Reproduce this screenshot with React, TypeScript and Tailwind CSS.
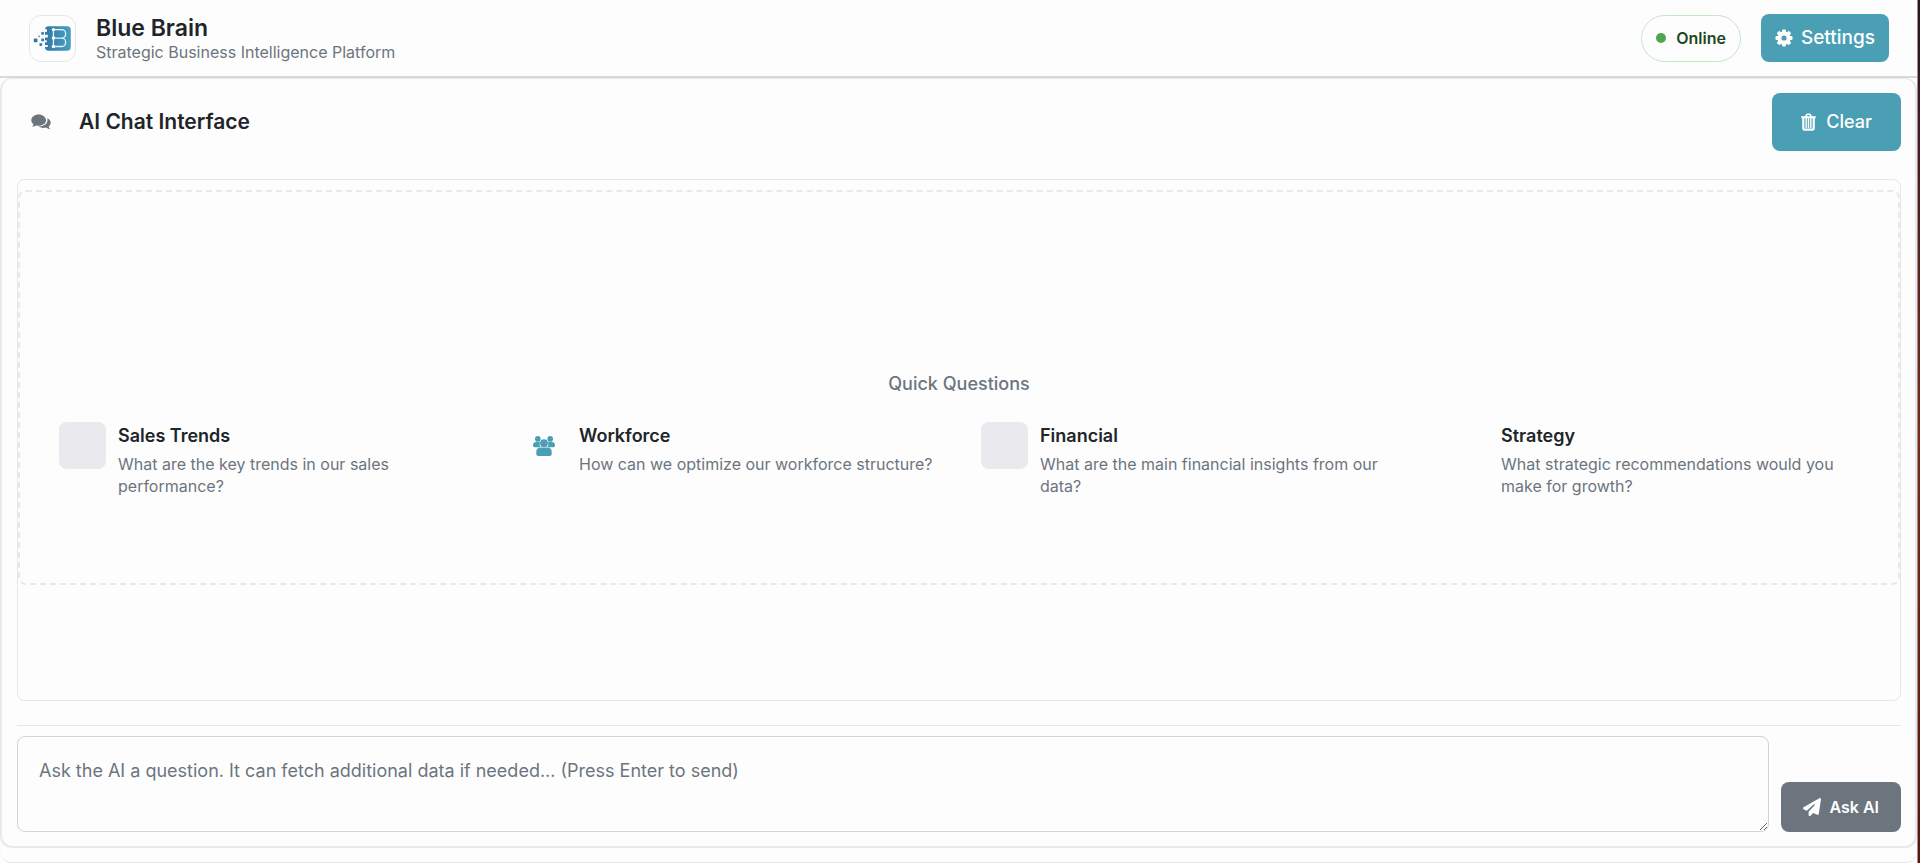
import React, { useState } from 'react';
import { FaPaperPlane } from 'react-icons/fa6';

interface QuickQuestion {
    title: string;
    question: string;
    icon: 'placeholder' | 'people' | 'none';
}

const quickQuestions: QuickQuestion[] = [
    { title: 'Sales Trends', question: 'What are the key trends in our sales performance?', icon: 'placeholder' },
    { title: 'Workforce', question: 'How can we optimize our workforce structure?', icon: 'people' },
    { title: 'Financial', question: 'What are the main financial insights from our data?', icon: 'placeholder' },
    { title: 'Strategy', question: 'What strategic recommendations would you make for growth?', icon: 'none' },
];

function Logo() {
    return (
        <svg viewBox="0 0 48 48" className="size-full" aria-hidden="true">
            <defs>
                <linearGradient id="brand" x1="0" y1="0" x2="1" y2="0">
                    <stop offset="0" stopColor="#2f78a8" />
                    <stop offset="1" stopColor="#4a9fc0" />
                </linearGradient>
            </defs>
            <rect x="16" y="11" width="27.500" height="26" rx="4" fill="url(#brand)" />
            <g fill="#fdfdfd">
                <rect x="15" y="14" width="3" height="3" />
                <rect x="15" y="20" width="4" height="3" />
                <rect x="15" y="26" width="3" height="2" />
                <rect x="15" y="31" width="4" height="2" />
            </g>
            <g fill="#2f78a8">
                <rect x="4" y="24" width="4" height="4" rx="1" />
                <rect x="12" y="17" width="3" height="3" rx="1" />
                <rect x="12" y="24" width="3" height="3" rx="1" />
                <rect x="10" y="29" width="3" height="3" rx="1" />
                <rect x="9" y="21" width="1.5" height="1.5" />
            </g>
            <path
                d="M25 14.5h9a4 4 0 0 1 4 4v1a4 4 0 0 1-4 4h-9m9 0a4 4 0 0 1 4 4v1a4 4 0 0 1-4 4h-9V14.5"
                fill="none"
                stroke="#e6f4fa"
                strokeWidth="1.4"
            />
            <g fill="#fff">
                <circle cx="25" cy="14.5" r="1.8" />
                <circle cx="25" cy="23.5" r="1.8" />
                <circle cx="25" cy="32.5" r="1.8" />
            </g>
        </svg>
    );
}

const gearTeeth = [0, 45, 90, 135, 180, 225, 270, 315];

function GearIcon() {
    return (
        <svg viewBox="0 0 18 18" className="size-[18px]" aria-hidden="true">
            <circle cx="9" cy="9" r="4.6" fill="none" stroke="currentColor" strokeWidth="4" />
            {gearTeeth.map((angle) => (
                <rect
                    key={angle}
                    x="7.1"
                    y="0.5"
                    width="3.8"
                    height="4"
                    rx="0.8"
                    fill="currentColor"
                    transform={`rotate(${angle} 9 9)`}
                />
            ))}
        </svg>
    );
}

function ChatIcon() {
    return (
        <svg viewBox="0 0 20 16" className="h-4 w-5" fill="#6c757d" aria-hidden="true">
            <path d="M7.600 0.500C3.500 0.500.3 3 .3 6.200c0 1.700.9 3.100 2.200 4.100-.2.900-.7 1.600-1.400 2.300 1.700 0 3-.5 4-1.200.8.200 1.600.3 2.500.3 4.200 0 7.400-2.300 7.400-5.500S11.800.5 7.600.5z" />
            <path d="M16.300 4.200c2 .9 3.400 2.600 3.400 4.500 0 1.500-.8 2.800-2 3.700.2 1 .7 1.900 1.500 2.700-1.700 0-3.100-.6-4.200-1.500-.7.200-1.500.3-2.300.3-2 0-3.800-.6-5.100-1.600 5 .1 8.900-2.500 8.900-6.100 0-.7-.1-1.300-.2-2z" />
        </svg>
    );
}

function TrashIcon() {
    return (
        <svg viewBox="0 0 15 18" className="h-[18px] w-[15px]" fill="none" stroke="currentColor" aria-hidden="true">
            <path d="M4.800 3.800 5.500 2Q5.800 1.200 6.600 1.200h1.800Q9.200 1.200 9.500 2l.7 1.800" strokeWidth="1.6" />
            <path d="M0.300 4.200h14.400" strokeWidth="2" />
            <path d="M2.300 4.500v10.600q0 1.500 1.300 1.500h7.800q1.300 0 1.300-1.500V4.500" strokeWidth="2.200" />
            <path d="M5.200 5v10M7.500 5v10M9.800 5v10" strokeWidth="1.400" />
        </svg>
    );
}

function PeopleIcon() {
    return (
        <svg viewBox="0 0 22 20" className="h-5 w-[22px]" fill="#4a9fb5" aria-hidden="true">
            <circle cx="4.800" cy="2.900" r="2.800" />
            <circle cx="17.200" cy="2.900" r="2.800" />
            <path d="M0 9.200C0 7 1.400 6 3.200 6h2.600c.5 0 .9.1 1.200.3-.6 1.700-.4 3.300.6 4.900H1.800C.7 11.200 0 10.500 0 9.200z" />
            <path d="M22 9.200C22 7 20.600 6 18.800 6h-2.600c-.5 0-.9.1-1.200.3.6 1.700.4 3.300-.6 4.900h5.800c1.100 0 1.800-.7 1.800-2z" />
            <circle cx="11" cy="7.200" r="3.900" />
            <path d="M7.300 11.400h7.400c2.300 0 4 1.700 4 4V18c0 1.200-.8 2-2 2H5.300c-1.200 0-2-.8-2-2v-2.600c0-2.300 1.700-4 4-4z" />
        </svg>
    );
}

function QuestionCard({ item, onSelect }: { item: QuickQuestion; onSelect: (q: string) => void }) {
    return (
        <button type="button" onClick={() => onSelect(item.question)} className="flex items-start gap-3 text-left">
            <span
                className={
                    item.icon === 'placeholder'
                        ? 'size-[47px] shrink-0 rounded-lg bg-[#e9e9ee]'
                        : 'flex size-[47px] shrink-0 items-center justify-center'
                }
            >
                {item.icon === 'people' && <PeopleIcon />}
            </span>
            <span className="flex flex-col gap-[3px]">
                <span className="text-lg leading-7 font-semibold text-[#212529]">{item.title}</span>
                <span className="text-base leading-[22px] text-[#6c757d]">{item.question}</span>
            </span>
        </button>
    );
}

export default function App() {
    const [message, setMessage] = useState('');

    return (
        <div className="flex min-h-screen bg-[#fdfdfd] font-['Inter','Liberation_Sans',sans-serif] text-[#212529]">
            <div className="flex flex-1 flex-col rounded-b-xl border-b border-[#e6e6eb]">
                <header className="flex items-center justify-between border-b-2 border-[#d8d8df] py-3.5 pr-7 pl-[29px]">
                    <div className="flex items-center gap-5">
                        <div className="size-[47px] rounded-xl border border-[#e6e6ea]">
                            <Logo />
                        </div>
                        <div>
                            <h1 className="text-[23px] leading-7 font-semibold">Blue Brain</h1>
                            <p className="text-base leading-5 text-[#6c757d]">Strategic Business Intelligence Platform</p>
                        </div>
                    </div>
                    <div className="flex items-center gap-5">
                        <div className="flex h-[47px] items-center gap-2.5 rounded-full border border-[#c6e6c3] px-3.5 text-base font-semibold text-[#1e4620]">
                            <span className="size-2.5 rounded-full bg-[#4fa64f]" />
                            Online
                        </div>
                        <button
                            type="button"
                            className="flex h-12 items-center gap-2 rounded-lg bg-[#4a9fb5] px-3.5 text-[19px] font-medium text-white"
                        >
                            <GearIcon />
                            Settings
                        </button>
                    </div>
                </header>

                <main className="mb-3.5 flex flex-1 flex-col rounded-xl border-2 border-t border-[#e8e8ee] pt-3.5 pr-3.5 pb-3.5 pl-[15px]">
                    <div className="flex items-center justify-between">
                        <div className="flex items-center gap-7 pl-3.5">
                            <ChatIcon />
                            <h2 className="text-[21px] leading-7 font-semibold">AI Chat Interface</h2>
                        </div>
                        <button
                            type="button"
                            className="flex h-[58px] items-center gap-2.5 rounded-lg bg-[#4a9fb5] px-[29px] text-lg font-medium text-white"
                        >
                            <TrashIcon />
                            Clear
                        </button>
                    </div>

                    <section className="mt-7 flex flex-1 flex-col rounded-lg border border-[#e6e6eb] pt-2.5 pb-[115px]">
                        <div className="flex flex-1 flex-col justify-end rounded-lg border-2 border-dashed border-[#e8e8ed] px-[39px] pb-[86px]">
                            <h3 className="mb-6 text-center text-lg font-medium text-[#6c757d]">Quick Questions</h3>
                            <div className="grid grid-cols-4 items-start gap-11">
                                {quickQuestions.map((item) => (
                                    <QuestionCard key={item.title} item={item} onSelect={setMessage} />
                                ))}
                            </div>
                        </div>
                    </section>

                    <form
                        className="mt-6 flex items-end gap-3 border-t border-[#e6e6eb] pt-2.5"
                        onSubmit={(e) => e.preventDefault()}
                    >
                        <textarea
                            aria-label="Message"
                            value={message}
                            onChange={(e) => setMessage(e.target.value)}
                            placeholder="Ask the AI a question. It can fetch additional data if needed... (Press Enter to send)"
                            className="block h-24 flex-1 rounded-lg border border-[#d0d3d9] px-[21px] py-5 text-lg placeholder:text-[#6c757d]"
                        />
                        <button
                            type="submit"
                            className="flex h-[50px] items-center gap-2 rounded-lg bg-[#6c757d] px-[22px] text-base font-semibold text-white"
                        >
                            <FaPaperPlane className="size-[18px]" />
                            Ask AI
                        </button>
                    </form>
                </main>
            </div>
            <div className="w-[3px] border-l border-[#9b8f8f] bg-gradient-to-b from-[#2a1520] via-[#7a2a16] to-[#5a160d]" />
        </div>
    );
}
